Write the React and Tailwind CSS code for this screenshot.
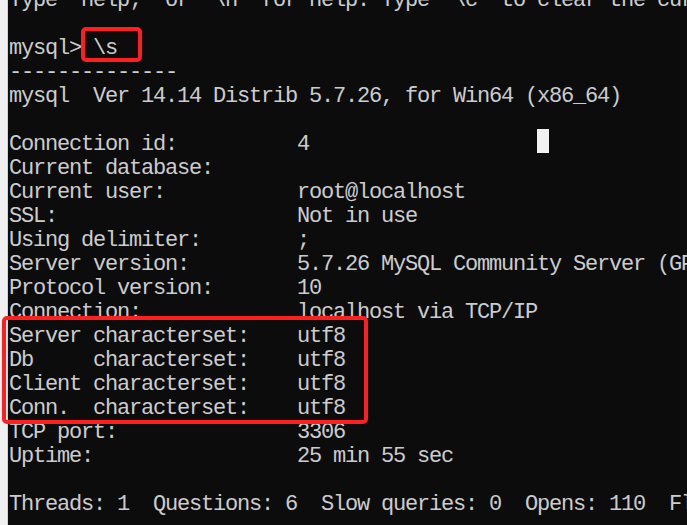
import React from 'react';

const lines = [
  "Type 'help;' or '\\h' for help. Type '\\c' to clear the current input statement.",
  '',
  'mysql> \\s',
  '--------------',
  'mysql  Ver 14.14 Distrib 5.7.26, for Win64 (x86_64)',
  '',
  'Connection id:          4',
  'Current database:',
  'Current user:           root@localhost',
  'SSL:                    Not in use',
  'Using delimiter:        ;',
  'Server version:         5.7.26 MySQL Community Server (GPL)',
  'Protocol version:       10',
  'Connection:             localhost via TCP/IP',
  'Server characterset:    utf8',
  'Db     characterset:    utf8',
  'Client characterset:    utf8',
  'Conn.  characterset:    utf8',
  'TCP port:               3306',
  'Uptime:                 25 min 55 sec',
  '',
  'Threads: 1  Questions: 6  Slow queries: 0  Opens: 110  Flush tables: 1  Open tables: 103',
];

const App = () => {
  return (
    <div className="relative flex h-[525px] w-[687px] overflow-hidden bg-[#0c0c0c]">
      {/* window frame edge */}
      <div className="w-[8px] shrink-0 border-r border-[#d4d4d4] bg-[#f0f0f0]" />

      {/* console text */}
      <div className="-mt-[11px] flex flex-col whitespace-pre pl-[1px] font-['Liberation_Mono',monospace] text-[22px] leading-[24px] tracking-[-1.2px] text-[#cccccc]">
        {lines.map((line, i) => (
          <div key={i} className="h-[24px]">
            {line}
          </div>
        ))}
      </div>

      {/* blinking cursor */}
      <div className="absolute left-[537px] top-[129px] h-[24px] w-[12px] bg-[#f2f2f2]" />

      {/* red highlight boxes */}
      <div className="absolute left-[81px] top-[27px] h-[35px] w-[61px] rounded-[5px] border-[4px] border-[#ff1f1f]" />
      <div className="absolute left-[2px] top-[316px] h-[108px] w-[366px] rounded-[5px] border-[4px] border-[#ff1f1f]" />
    </div>
  );
};

export default App;
